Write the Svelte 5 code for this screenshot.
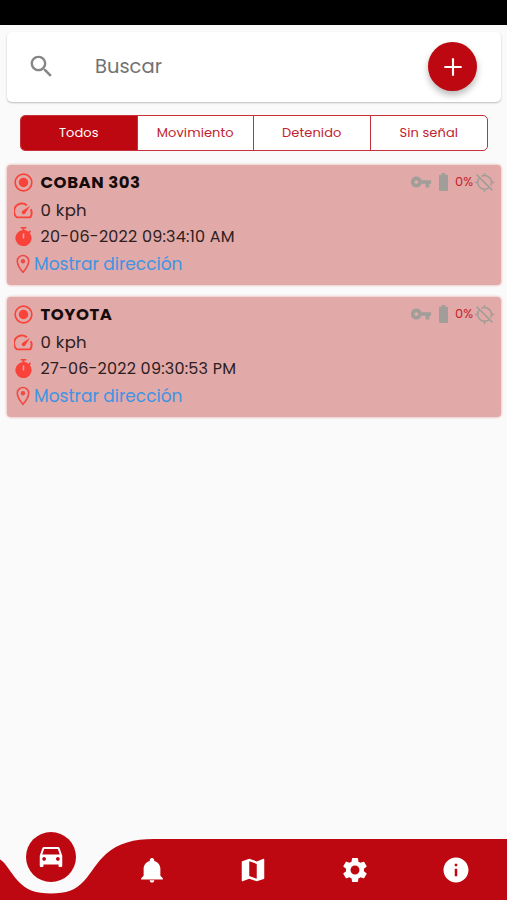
<script lang="ts">
  type Device = {
    id: number;
    name: string;
    speed: string;
    updatedAt: string;
    battery: string;
  };

  const devices: Device[] = [
    { id: 1, name: 'COBAN 303', speed: '0 kph', updatedAt: '20-06-2022 09:34:10 AM', battery: '0%' },
    { id: 2, name: 'TOYOTA', speed: '0 kph', updatedAt: '27-06-2022 09:30:53 PM', battery: '0%' }
  ];

  const filters = ['Todos', 'Movimiento', 'Detenido', 'Sin señal'];
  let activeFilter = $state('Todos');

  const tabs = [
    { label: 'Alertas', path: 'M20.700 18.500v1H3.300v-1l2-2v-5.500c0-3.100 2-5.500 4.900-6.300a1.850 1.850 0 1 1 3.600 0c2.900.8 4.900 3.200 4.900 6.300v5.500l2 2m-6.800 1.700a1.900 1.900 0 0 1-3.800 0' },
    { label: 'Mapa', path: 'M20.5 3l-.16.03L15 5.1 9 3 3.36 4.9c-.21.07-.36.25-.36.48V20.500c0 .28.22.5.5.5l.16-.03L9 18.900l6 2.100 5.640-1.900c.21-.07.36-.25.36-.48V3.500c0-.28-.22-.5-.5-.5zM15 19l-6-2.110V5l6 2.110V19z' },
    { label: 'Ajustes', path: 'M19.14 12.94c.04-.3.06-.61.06-.94 0-.32-.02-.64-.07-.94l2.030-1.580c.18-.14.23-.41.12-.61l-1.920-3.320c-.12-.22-.37-.29-.59-.22l-2.390.96c-.5-.38-1.030-.7-1.620-.94l-.36-2.540c-.04-.24-.24-.41-.48-.41h-3.840c-.24 0-.43.17-.47.41l-.36 2.540c-.59.24-1.130.57-1.620.94l-2.390-.96c-.22-.08-.47 0-.59.22L2.740 8.870c-.12.21-.08.47.12.61l2.030 1.580c-.05.3-.09.63-.09.94s.02.64.07.94l-2.030 1.580c-.18.14-.23.41-.12.61l1.920 3.320c.12.22.37.29.59.22l2.390-.96c.5.38 1.030.7 1.620.94l.36 2.540c.05.24.24.41.48.41h3.840c.24 0 .44-.17.47-.41l.36-2.540c.59-.24 1.130-.56 1.620-.94l2.390.96c.22.08.47 0 .59-.22l1.920-3.320c.12-.22.07-.47-.12-.61l-2.010-1.580zM12 15.600c-1.980 0-3.600-1.620-3.600-3.600s1.620-3.600 3.600-3.600 3.600 1.620 3.600 3.600-1.620 3.600-3.600 3.600z' },
    { label: 'Información', path: 'M12 2C6.480 2 2 6.480 2 12s4.480 10 10 10 10-4.480 10-10S17.520 2 12 2zm1 15h-2v-6h2v6zm0-8h-2V7h2v2z' }
  ];
</script>

<div class="screen">
  <div class="status-bar"></div>

  <header class="search-card">
    <svg class="search-icon" viewBox="0 0 24 24"><path d="M15.500 14h-.79l-.28-.27C15.410 12.590 16 11.110 16 9.500 16 5.910 13.090 3 9.500 3S3 5.910 3 9.500 5.910 16 9.500 16c1.610 0 3.090-.59 4.230-1.570l.27.28v.79l5 4.990L20.490 19l-4.990-5zm-6 0C7.010 14 5 11.990 5 9.500S7.010 5 9.500 5 14 7.010 14 9.500 11.990 14 9.500 14z" /></svg>
    <span class="placeholder">Buscar</span>
    <button class="add" aria-label="Agregar">
      <svg viewBox="0 0 24 24"><path d="M18.500 12.800h-5.700v5.700h-1.600v-5.700H5.500v-1.600h5.700V5.500h1.600v5.700h5.700z" /></svg>
    </button>
  </header>

  <div class="filters">
    {#each filters as filter (filter)}
      <button class="filter" class:active={filter === activeFilter} onclick={() => (activeFilter = filter)}>
        {filter}
      </button>
    {/each}
  </div>

  <main class="devices">
    {#each devices as device (device.id)}
      <article class="device">
        <div class="row title-row">
          <svg class="icon" viewBox="0 0 20 20">
            <circle cx="10" cy="10" r="8.800" fill="none" stroke="currentColor" stroke-width="1.700" />
            <circle cx="10" cy="10" r="5" />
          </svg>
          <h2 class="name">{device.name}</h2>
          <div class="status">
            <svg class="key" viewBox="0 0 24 24"><path d="M12.650 10C11.830 7.670 9.610 6 7 6c-3.310 0-6 2.690-6 6s2.690 6 6 6c2.610 0 4.830-1.670 5.650-4H17v4h4v-4h2v-4H12.650zM7 14c-1.100 0-2-.9-2-2s.9-2 2-2 2 .9 2 2-.9 2-2 2z" /></svg>
            <svg class="battery" viewBox="0 0 10 20"><path d="M3 0h4v2h1.800Q10 2 10 3.200v15.600Q10 20 8.800 20H1.200Q0 20 0 18.800V3.200Q0 2 1.200 2H3z" /></svg>
            <span class="percent">{device.battery}</span>
            <svg class="gps" viewBox="0 0 24 24" fill="none" stroke="currentColor" stroke-width="1.800">
              <path d="M12 1v3M12 20v3M1 12h3M20 12h3M3 3l18 18M8.500 4.850A8 8 0 0 1 19.150 15.500M17.650 17.650A8 8 0 0 1 6.350 6.350" />
            </svg>
          </div>
        </div>
        <div class="row speed-row">
          <svg class="icon" viewBox="0 0 20 20" fill="none" stroke="currentColor" stroke-width="2" stroke-linejoin="round">
            <path d="M13.500 4.400A8.200 8.200 0 0 0 3 17.200H17A8.200 8.200 0 0 0 17.600 8.700" />
            <path class="needle" d="M17 4.900 11.800 13.200A2 2 0 1 1 8.700 10.400Z" />
          </svg>
          <span class="speed">{device.speed}</span>
        </div>
        <div class="row date-row">
          <svg class="icon" viewBox="0 0 20 20">
            <path fill-rule="evenodd" d="M7 0h6v1.700h-2v1.500a8.500 8.500 0 0 1 4.200 1.700l1.400-1.400 1.400 1.400-1.400 1.400A8.500 8.500 0 1 1 9 3.200V1.700H7zM9.200 6.800v5.400h1.600V6.800z" />
          </svg>
          <span class="date">{device.updatedAt}</span>
        </div>
        <div class="row address-row">
          <svg class="pin" viewBox="0 0 20 20">
            <path d="M10 1.500a5.700 5.700 0 0 0-5.700 5.700C4.300 11.600 10 18.300 10 18.300s5.700-6.700 5.700-11.100A5.700 5.700 0 0 0 10 1.500z" fill="none" stroke="currentColor" stroke-width="1.600" />
            <circle cx="10" cy="7.200" r="2.200" />
          </svg>
          <a class="address" href="#direccion">Mostrar dirección</a>
        </div>
      </article>
    {/each}
  </main>

  <nav class="nav">
    <!-- bar with the notch that holds the selected tab -->
    <svg class="nav-shape" viewBox="0 0 507 61" preserveAspectRatio="none">
      <path d="M0 20.500C6 24 10 33 18 42 26 51 36 54.500 51 54.500S76 51 84 42C92 33 96 24 106 15 118 4 134 0 154 0H507V61H0Z" />
    </svg>
    <button class="tab current" aria-label="Vehículos">
      <svg viewBox="0 0 24 24"><path d="M18.920 5.010C18.720 4.420 18.160 4 17.500 4h-11c-.66 0-1.210.42-1.420 1.010L3 11v8c0 .55.45 1 1 1h1c.55 0 1-.45 1-1v-1h12v1c0 .55.45 1 1 1h1c.55 0 1-.45 1-1v-8l-2.080-5.990zM6.500 15c-.83 0-1.500-.67-1.500-1.500S5.670 12 6.500 12s1.500.67 1.500 1.500S7.330 15 6.500 15zm11 0c-.83 0-1.500-.67-1.500-1.500s.67-1.500 1.500-1.500 1.500.67 1.500 1.500-.67 1.500-1.500 1.500zM5 10l1.500-4.500h11L19 10H5z" /></svg>
    </button>
    {#each tabs as tab (tab.label)}
      <button class="tab" aria-label={tab.label}>
        <svg viewBox="0 0 24 24"><path d={tab.path} /></svg>
      </button>
    {/each}
  </nav>
</div>

<style>
  :global(body) {
    margin: 0;
    background: #fafafa;
  }

  .screen {
    --brand: #bd0711;
    --alert: #f9433a;
    display: flex;
    flex-direction: column;
    width: 507px;
    height: 900px;
    overflow: hidden;
    background: #fafafa;
    font-family: Poppins, Inter, sans-serif;
  }

  svg {
    display: block;
    flex: none;
    fill: currentColor;
  }
  svg[fill='none'] { fill: none; }

  button {
    margin: 0;
    padding: 0;
    border: 0;
    background: none;
    font: inherit;
  }

  .status-bar {
    flex: none;
    height: 25px;
    background: #000;
  }

  .search-card {
    display: flex;
    flex: none;
    align-items: center;
    height: 70px;
    margin: 7px 6px 0 7px;
    padding: 0 24px 1px 20px;
    box-sizing: border-box;
    border-radius: 5px;
    background: #fff;
    box-shadow: 0 1px 2px rgba(0, 0, 0, 0.25);
  }
  .search-icon {
    width: 29px;
    height: 29px;
    color: #868686;
  }
  .placeholder {
    flex: 1;
    margin-left: 39px;
    font-size: 19.500px;
    color: #727272;
  }
  .add {
    display: grid;
    place-items: center;
    width: 49px;
    height: 49px;
    border-radius: 50%;
    background: var(--brand);
    color: #fff;
    box-shadow: 0 4px 7px rgba(0, 0, 0, 0.28);
  }
  .add svg { width: 32px; height: 32px; }

  .filters {
    display: grid;
    flex: none;
    grid-template-columns: repeat(4, 1fr);
    height: 36px;
    margin: 13px 19px 0 20px;
    box-sizing: border-box;
    border: 1px solid #c5303a;
    border-radius: 5px;
    overflow: hidden;
    background: #fff;
  }
  .filter {
    padding: 0 0 1px;
    font-size: 13px;
    letter-spacing: 0.1px;
    color: #c1222d;
    border-right: 1px solid #c5303a;
  }
  .filter:last-child { border-right: 0; }
  .filter.active {
    background: var(--brand);
    color: #fff;
  }

  .devices {
    display: flex;
    flex: 1;
    flex-direction: column;
    gap: 12px;
    margin: 14px 6px 0 7px;
  }
  .device {
    height: 120px;
    padding: 3px 6px 0 7px;
    box-sizing: border-box;
    border-radius: 4px;
    background: #e1aaa8;
    box-shadow: 0 0 3px #dc9c98;
  }
  .row {
    display: flex;
    align-items: center;
    color: #2e2020;
    white-space: nowrap;
  }
  .title-row { height: 28px; }
  .speed-row { height: 28px; }
  .date-row { height: 24px; }
  .address-row { height: 32px; }

  .icon {
    width: 19px;
    height: 19px;
    margin: 0 8px 0 -0.5px;
    color: var(--alert);
  }
  .needle { fill: currentColor; stroke: none; }
  .pin {
    width: 20px;
    height: 20px;
    margin-left: -1px;
    color: #ef4a43;
  }

  .name {
    flex: 1;
    margin: 0;
    font-size: 16.500px;
    font-weight: 700;
    letter-spacing: 0.55px;
    color: #160b0b;
  }
  .speed {
    font-size: 16.500px;
    letter-spacing: 0.3px;
  }
  .date {
    font-size: 16px;
    letter-spacing: 0.22px;
  }
  .address {
    margin-left: 1px;
    font-size: 17px;
    color: #4293e2;
    text-decoration: none;
  }

  .status {
    display: flex;
    align-items: center;
    color: #a19d98;
  }
  .key { width: 22px; height: 22px; }
  .battery {
    width: 9px;
    height: 18px;
    margin: 0 7px 0 7px;
  }
  .percent {
    width: 18px;
    font-size: 13px;
    color: #c5222c;
  }
  .gps {
    width: 21px;
    height: 21px;
    margin-left: 1px;
  }

  .nav {
    display: grid;
    position: relative;
    flex: none;
    grid-template-columns: repeat(5, 1fr);
    height: 61px;
    color: #fff;
  }
  .nav-shape {
    position: absolute;
    inset: 0;
    width: 100%;
    height: 100%;
    color: var(--brand);
  }
  .tab {
    display: grid;
    position: relative;
    place-items: center;
    color: #fff;
  }
  .tab svg { width: 30px; height: 30px; }
  .tab.current {
    top: -7px;
    justify-self: center;
    width: 50px;
    height: 50px;
    border-radius: 50%;
    background: var(--brand);
  }
</style>
